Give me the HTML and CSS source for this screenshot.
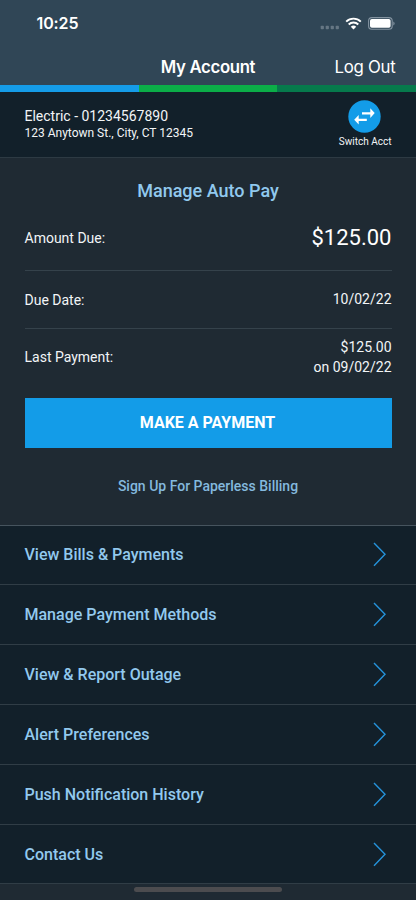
FILE: index.html
```html
<!DOCTYPE html>
<html lang="en">
<head>
<meta charset="utf-8">
<meta name="viewport" content="width=device-width, initial-scale=1">
<title>My Account</title>
<link rel="stylesheet" href="styles.css">
</head>
<body>
<div class="screen">
  <header class="header">
    <div class="status">
      <span class="time">10:25</span>
      <div class="status-icons">
        <svg class="signal" width="20" height="5" viewBox="0 0 20 5"><rect x=".7" y=".8" width="3.2" height="3.4" rx=".8"/><rect x="5.7" y=".8" width="3.2" height="3.4" rx=".8"/><rect x="10.7" y=".8" width="3.2" height="3.4" rx=".8"/><rect x="15.7" y=".8" width="3.2" height="3.4" rx=".8"/></svg>
        <svg class="wifi" width="17" height="13" viewBox="0 0 17 13"><path d="M1.2 4.6a10.4 10.4 0 0 1 14.6 0M3.7 7.5a6.8 6.8 0 0 1 9.6 0" fill="none" stroke="#fff" stroke-width="1.9"/><path d="M5.8 9.8a3.9 3.9 0 0 1 5.4 0L8.5 12.5z" fill="#fff"/></svg>
        <svg class="battery" width="27" height="13" viewBox="0 0 27 13"><rect x=".6" y=".6" width="23.6" height="11.6" rx="3.3" fill="none" stroke="#8393a0" stroke-width="1.1"/><rect x="2" y="2" width="20.6" height="8.8" rx="1.8" fill="#fff"/><path d="M25.3 4.4v4a2.2 2.2 0 0 0 0-4z" fill="#8393a0"/></svg>
      </div>
    </div>
    <nav class="navbar">
      <h1 class="title">My Account</h1>
      <a class="logout">Log Out</a>
    </nav>
  </header>
  <div class="stripe"><i class="blue"></i><i class="green"></i><i class="dark-green"></i></div>

  <section class="account">
    <div class="account-info">
      <div class="account-name">Electric - 01234567890</div>
      <div class="account-address">123 Anytown St., City, CT 12345</div>
    </div>
    <div class="switch">
      <svg width="34" height="33" viewBox="0 0 34 33"><circle cx="16.5" cy="16.5" r="16.2" fill="#139ce8"/><path d="M14 12.2h8.3V8.3l4.4 4.8-4.4 4.8v-3.5H14zM18.8 18.7h-8.1v-3.6l-4.5 4.7 4.5 4.8v-3.5h8.1z" fill="#fff"/></svg>
      <span class="switch-label">Switch Acct</span>
    </div>
  </section>

  <section class="billing">
    <h2 class="autopay">Manage Auto Pay</h2>
    <div class="row row-amount"><span>Amount Due:</span><span class="amount">$125.00</span></div>
    <div class="row row-date"><span>Due Date:</span><span class="value">10/02/22</span></div>
    <div class="row row-last"><span class="label">Last Payment:</span><span class="value">$125.00<br>on 09/02/22</span></div>
    <button class="pay">MAKE A PAYMENT</button>
    <a class="paperless">Sign Up For Paperless Billing</a>
  </section>

  <nav class="menu">
    <a class="item"><span>View Bills &amp; Payments</span><svg class="chevron" viewBox="0 0 14 25"><path d="M1 1 12 12.3 1 23.8"/></svg></a>
    <a class="item"><span>Manage Payment Methods</span><svg class="chevron" viewBox="0 0 14 25"><path d="M1 1 12 12.3 1 23.8"/></svg></a>
    <a class="item"><span>View &amp; Report Outage</span><svg class="chevron" viewBox="0 0 14 25"><path d="M1 1 12 12.3 1 23.8"/></svg></a>
    <a class="item"><span>Alert Preferences</span><svg class="chevron" viewBox="0 0 14 25"><path d="M1 1 12 12.3 1 23.8"/></svg></a>
    <a class="item"><span>Push Notification History</span><svg class="chevron" viewBox="0 0 14 25"><path d="M1 1 12 12.3 1 23.8"/></svg></a>
    <a class="item last"><span>Contact Us</span><svg class="chevron" viewBox="0 0 14 25"><path d="M1 1 12 12.3 1 23.8"/></svg></a>
  </nav>
  <footer class="home"><span class="home-bar"></span></footer>
</div>
</body>
</html>
```
FILE: styles.css
```css
* { box-sizing: border-box; }
body { margin: 0; background: #1f2a33; }
svg { display: block; flex: none; }
.screen {
  width: 416px; height: 900px; overflow: hidden;
  display: flex; flex-direction: column;
  background: #1f2a33; color: #f2f5f7;
  font-family: Roboto, sans-serif; font-size: 14px;
}
.header { height: 85px; flex: none; background: #304656; color: #fff; font-family: Inter, sans-serif; }
.status { height: 46px; padding: 0 21.5px 0 36.5px; display: flex; justify-content: space-between; align-items: flex-end; }
.time { font-size: 16px; font-weight: 600; line-height: 20px; margin-bottom: 13px; letter-spacing: -.1px; }
.status-icons { display: flex; align-items: flex-end; height: 13px; margin-bottom: 16.5px; }
.signal { fill: #667784; margin-right: 5px; }
.wifi { margin-right: 5.5px; }
.navbar { height: 39px; display: grid; grid-template-columns: 1fr auto 1fr; align-items: center; padding: 3px 20.5px 0; }
.title { grid-column: 2; margin: 0; font-size: 16.8px; font-weight: 600; line-height: 22px; letter-spacing: -.35px; }
.logout { justify-self: end; font-size: 16.8px; line-height: 22px; letter-spacing: -.25px; }
.stripe { display: grid; grid-template-columns: 138.5px 138.5px 1fr; height: 7px; flex: none; }
.blue { background: #159ce8; }
.green { background: #0bae48; }
.dark-green { background: #067a4c; }
.account { height: 66px; flex: none; display: flex; justify-content: space-between; padding: 0 24.5px; background: #12202a; border-bottom: 1px solid #2d3a43; }
.account-info { padding-top: 16px; }
.account-name { line-height: 17px; font-size: 14px; }
.account-address { line-height: 16px; font-size: 12px; }
.switch { display: flex; flex-direction: column; align-items: center; padding-top: 8px; }
.switch-label { font-size: 10px; line-height: 14px; margin-top: 2px; }
.billing { height: 367px; flex: none; padding: 0 24.5px; display: flex; flex-direction: column; }
.autopay { margin: 22px 0 0; text-align: center; font-size: 18px; line-height: 22px; font-weight: 500; color: #91c9ee; }
.row { display: flex; justify-content: space-between; align-items: center; }
.row-amount { height: 69px; padding-top: 3px; border-bottom: 1px solid #35424b; }
.amount { font-size: 22px; color: #fff; }
.row-date { height: 58px; border-bottom: 1px solid #35424b; }
.row-last { height: 57px; }
.label { padding-bottom: 2px; }
.value { text-align: right; line-height: 19.6px; }
.pay { height: 50px; margin: 12px 0 0; border: 0; padding: 0 1px 1px 0; background: #139ce8; color: #fff; font: 700 16px Roboto, sans-serif; }
.paperless { text-align: center; margin-top: 28px; font-size: 14px; line-height: 20px; font-weight: 500; color: #84b9de; }
.menu { flex: none; border-top: 1px solid #46545e; background: #12202a; }
.item { display: flex; align-items: center; justify-content: space-between; height: 60px; padding: 0 29px 0 24.5px; border-bottom: 1px solid #303d46; font-size: 16px; font-weight: 500; color: #92c9ee; }
.item:first-child { height: 59px; padding-bottom: 1px; }
.item.last { height: 59px; }
.chevron { width: 14px; height: 25px; fill: none; stroke: #2593da; stroke-width: 1.4; }
.home { display: flex; justify-content: center; padding-top: 3px; }
.home-bar { width: 148px; height: 5px; border-radius: 3px; background: #4c4c4f; }
```
